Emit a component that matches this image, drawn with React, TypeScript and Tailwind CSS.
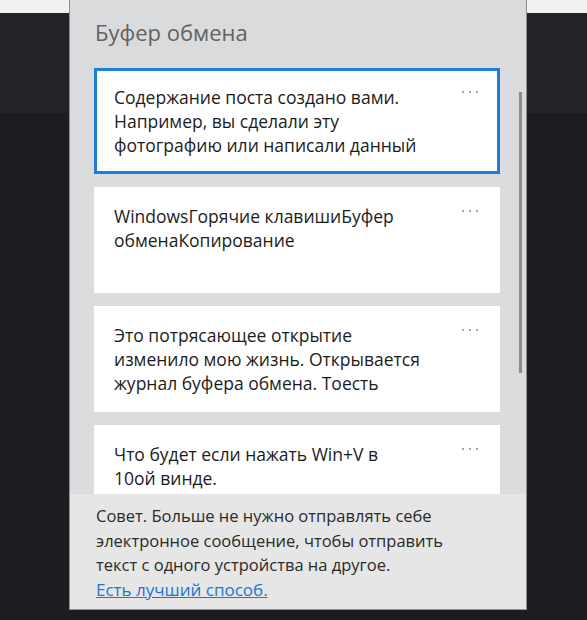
import React from "react";

const clips: string[][] = [
  ["Содержание поста создано вами.", "Например, вы сделали эту", "фотографию или написали данный"],
  ["WindowsГорячие клавишиБуфер", "обменаКопирование"],
  ["Это потрясающее открытие", "изменило мою жизнь. Открывается", "журнал буфера обмена. Тоесть"],
  ["Что будет если нажать Win+V в", "10ой винде."],
];

const Dots = () => (
  <svg width="18" height="4" viewBox="0 0 18 4" className="shrink-0">
    <circle cx="2" cy="2" r="1" fill="#8a8a8a" />
    <circle cx="9" cy="2" r="1" fill="#8a8a8a" />
    <circle cx="16" cy="2" r="1" fill="#8a8a8a" />
  </svg>
);

function ClipCard({ lines, selected }: { lines: string[]; selected?: boolean }) {
  return (
    <div
      className={
        "flex h-[106px] shrink-0 items-start justify-between bg-white pl-[17px] pr-[18px] pt-[14px] border-[3px] " +
        (selected ? "border-[#1a7fd6]" : "border-white")
      }
    >
      <p className="whitespace-nowrap text-[17.5px] leading-[24px] text-[#1c1c1c]">
        {lines.map((l, i) => (
          <span key={i} className="block">
            {l}
          </span>
        ))}
      </p>
      <div className="pt-[5px]">
        <Dots />
      </div>
    </div>
  );
}

export default function App() {
  return (
    <div
      className="relative h-[620px] w-[587px] overflow-hidden bg-[#1b1d20]"
      style={{ fontFamily: '"Open Sans", "Noto Sans", sans-serif' }}
    >
      {/* page behind the flyout */}
      <div className="h-[13px] bg-[#f1f1f1]" />
      <div className="h-[100px] bg-[#222427]" />

      {/* clipboard flyout */}
      <div className="absolute left-[69px] top-0 flex h-[610px] w-[458px] flex-col border-x border-b border-[#8e8e8e] bg-[#dadbdd]">
        <div className="h-[68px] shrink-0 pl-[25px] pt-[17px] text-[22px] leading-[30px] text-[#626262]">
          Буфер обмена
        </div>

        <div className="relative flex-1 overflow-hidden">
          <div className="flex flex-col gap-[13px] pl-[24px] pr-[26px]">
            {clips.map((c, i) => (
              <ClipCard key={i} lines={c} selected={i === 0} />
            ))}
          </div>
          {/* scrollbar */}
          <div className="absolute right-[4px] top-[24px] h-[281px] w-[3px] bg-[#8c8c8c]" />
        </div>

        <div className="h-[115px] shrink-0 whitespace-nowrap bg-[#e6e6e6] pl-[26px] pt-[10px] text-[16.5px] leading-[24.7px] text-[#2a2a2a]">
          <p>
            <span className="block">Совет. Больше не нужно отправлять себе</span>
            <span className="block">электронное сообщение, чтобы отправить</span>
            <span className="block">текст с одного устройства на другое.</span>
          </p>
          <a className="text-[17px] text-[#1a77cf] underline" href="#">
            Есть лучший способ.
          </a>
        </div>
      </div>
    </div>
  );
}
